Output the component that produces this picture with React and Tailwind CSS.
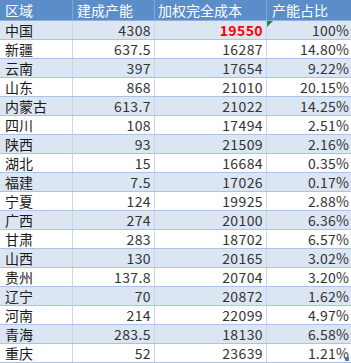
const rows = [
  ["中国", "4308", "19550", "100%"],
  ["新疆", "637.5", "16287", "14.80%"],
  ["云南", "397", "17654", "9.22%"],
  ["山东", "868", "21010", "20.15%"],
  ["内蒙古", "613.7", "21022", "14.25%"],
  ["四川", "108", "17494", "2.51%"],
  ["陕西", "93", "21509", "2.16%"],
  ["湖北", "15", "16684", "0.35%"],
  ["福建", "7.5", "17026", "0.17%"],
  ["宁夏", "124", "19925", "2.88%"],
  ["广西", "274", "20100", "6.36%"],
  ["甘肃", "283", "18702", "6.57%"],
  ["山西", "130", "20165", "3.02%"],
  ["贵州", "137.8", "20704", "3.20%"],
  ["辽宁", "70", "20872", "1.62%"],
  ["河南", "214", "22099", "4.97%"],
  ["青海", "283.5", "18130", "6.58%"],
  ["重庆", "52", "23639", "1.21%"],
];

const font = { fontFamily: '"Noto Sans CJK SC", "Noto Sans", sans-serif' };

export default function App() {
  return (
    <div className="w-[351px] h-[363px] bg-white overflow-hidden text-[14px] leading-none" style={font}>
      <div className="flex h-[21px] bg-[#5b8ec8] text-white border-b border-[#8fb2dc]">
        <div className="w-[73px] pl-[5px] flex items-center border-r border-[#7ea6d6]">区域</div>
        <div className="w-[82px] pl-[4px] flex items-center border-r border-[#7ea6d6]">建成产能</div>
        <div className="w-[112px] pl-[3px] flex items-center border-r border-[#7ea6d6]">加权完全成本</div>
        <div className="flex-1 pl-[5px] flex items-center">产能占比</div>
      </div>
      {rows.map((r, i) => (
        <div
          key={r[0]}
          className={`flex h-[19px] border-b border-[#a9c4e4] ${i % 2 === 0 ? "bg-[#dce6f2]" : "bg-white"}`}
        >
          <div className="w-[73px] pl-[5px] flex items-center text-[#1a1a1a] border-r border-[#c6d6ea]">{r[0]}</div>
          <div className="w-[82px] pr-[3px] flex items-center justify-end text-[#333] tracking-[0.4px] border-r border-[#c6d6ea]">{r[1]}</div>
          <div
            className={`w-[112px] pr-[3px] flex items-center justify-end tracking-[0.4px] border-r border-[#c6d6ea] ${i === 0 ? "text-[#ff0000] font-bold" : "text-[#333]"}`}
          >
            {r[2]}
          </div>
          <div className="relative flex-1 pr-[2px] flex items-center justify-end text-[#333] tracking-[0.2px]">
            {i === 0 && (
              <span className="absolute left-0 top-0 w-0 h-0 border-t-[6px] border-t-[#1e8a3a] border-r-[6px] border-r-transparent" />
            )}
            {r[3]}
            {i === rows.length - 1 && (
              <span className="absolute right-[2px] bottom-[1px] w-[4px] h-[4px] bg-[#4a78b5]" />
            )}
          </div>
        </div>
      ))}
    </div>
  );
}
